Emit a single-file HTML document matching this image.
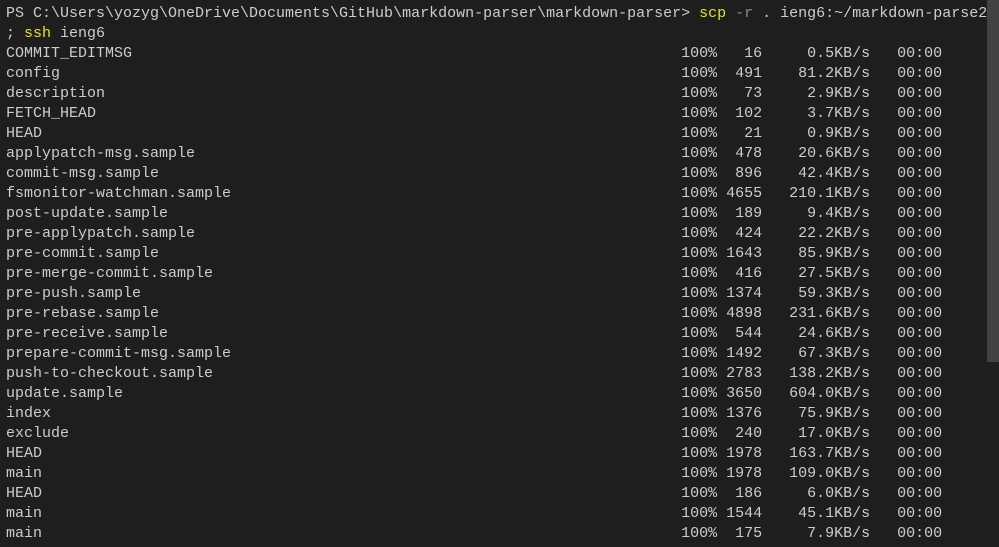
<!DOCTYPE html>
<html><head><meta charset="utf-8"><style>
html,body{margin:0;padding:0;background:#1e1e1e;width:999px;height:547px;overflow:hidden}
pre{margin:0;padding:4px 0 0 6px;font-family:"Liberation Mono",monospace;font-size:15px;line-height:20px;color:#cccccc}
.y{color:#e5e510}.g{color:#8a8a8a}
.sb{position:absolute;left:987px;top:0;width:12px;height:362px;background:#424242}
</style></head><body>
<pre>PS C:\Users\yozyg\OneDrive\Documents\GitHub\markdown-parser\markdown-parser&gt; <span class="y">scp</span> <span class="g">-r</span> . ieng6:~/markdown-parse2
; <span class="y">ssh</span> ieng6
COMMIT_EDITMSG                                                             100%   16     0.5KB/s   00:00
config                                                                     100%  491    81.2KB/s   00:00
description                                                                100%   73     2.9KB/s   00:00
FETCH_HEAD                                                                 100%  102     3.7KB/s   00:00
HEAD                                                                       100%   21     0.9KB/s   00:00
applypatch-msg.sample                                                      100%  478    20.6KB/s   00:00
commit-msg.sample                                                          100%  896    42.4KB/s   00:00
fsmonitor-watchman.sample                                                  100% 4655   210.1KB/s   00:00
post-update.sample                                                         100%  189     9.4KB/s   00:00
pre-applypatch.sample                                                      100%  424    22.2KB/s   00:00
pre-commit.sample                                                          100% 1643    85.9KB/s   00:00
pre-merge-commit.sample                                                    100%  416    27.5KB/s   00:00
pre-push.sample                                                            100% 1374    59.3KB/s   00:00
pre-rebase.sample                                                          100% 4898   231.6KB/s   00:00
pre-receive.sample                                                         100%  544    24.6KB/s   00:00
prepare-commit-msg.sample                                                  100% 1492    67.3KB/s   00:00
push-to-checkout.sample                                                    100% 2783   138.2KB/s   00:00
update.sample                                                              100% 3650   604.0KB/s   00:00
index                                                                      100% 1376    75.9KB/s   00:00
exclude                                                                    100%  240    17.0KB/s   00:00
HEAD                                                                       100% 1978   163.7KB/s   00:00
main                                                                       100% 1978   109.0KB/s   00:00
HEAD                                                                       100%  186     6.0KB/s   00:00
main                                                                       100% 1544    45.1KB/s   00:00
main                                                                       100%  175     7.9KB/s   00:00</pre>
<div class="sb"></div>
</body></html>
